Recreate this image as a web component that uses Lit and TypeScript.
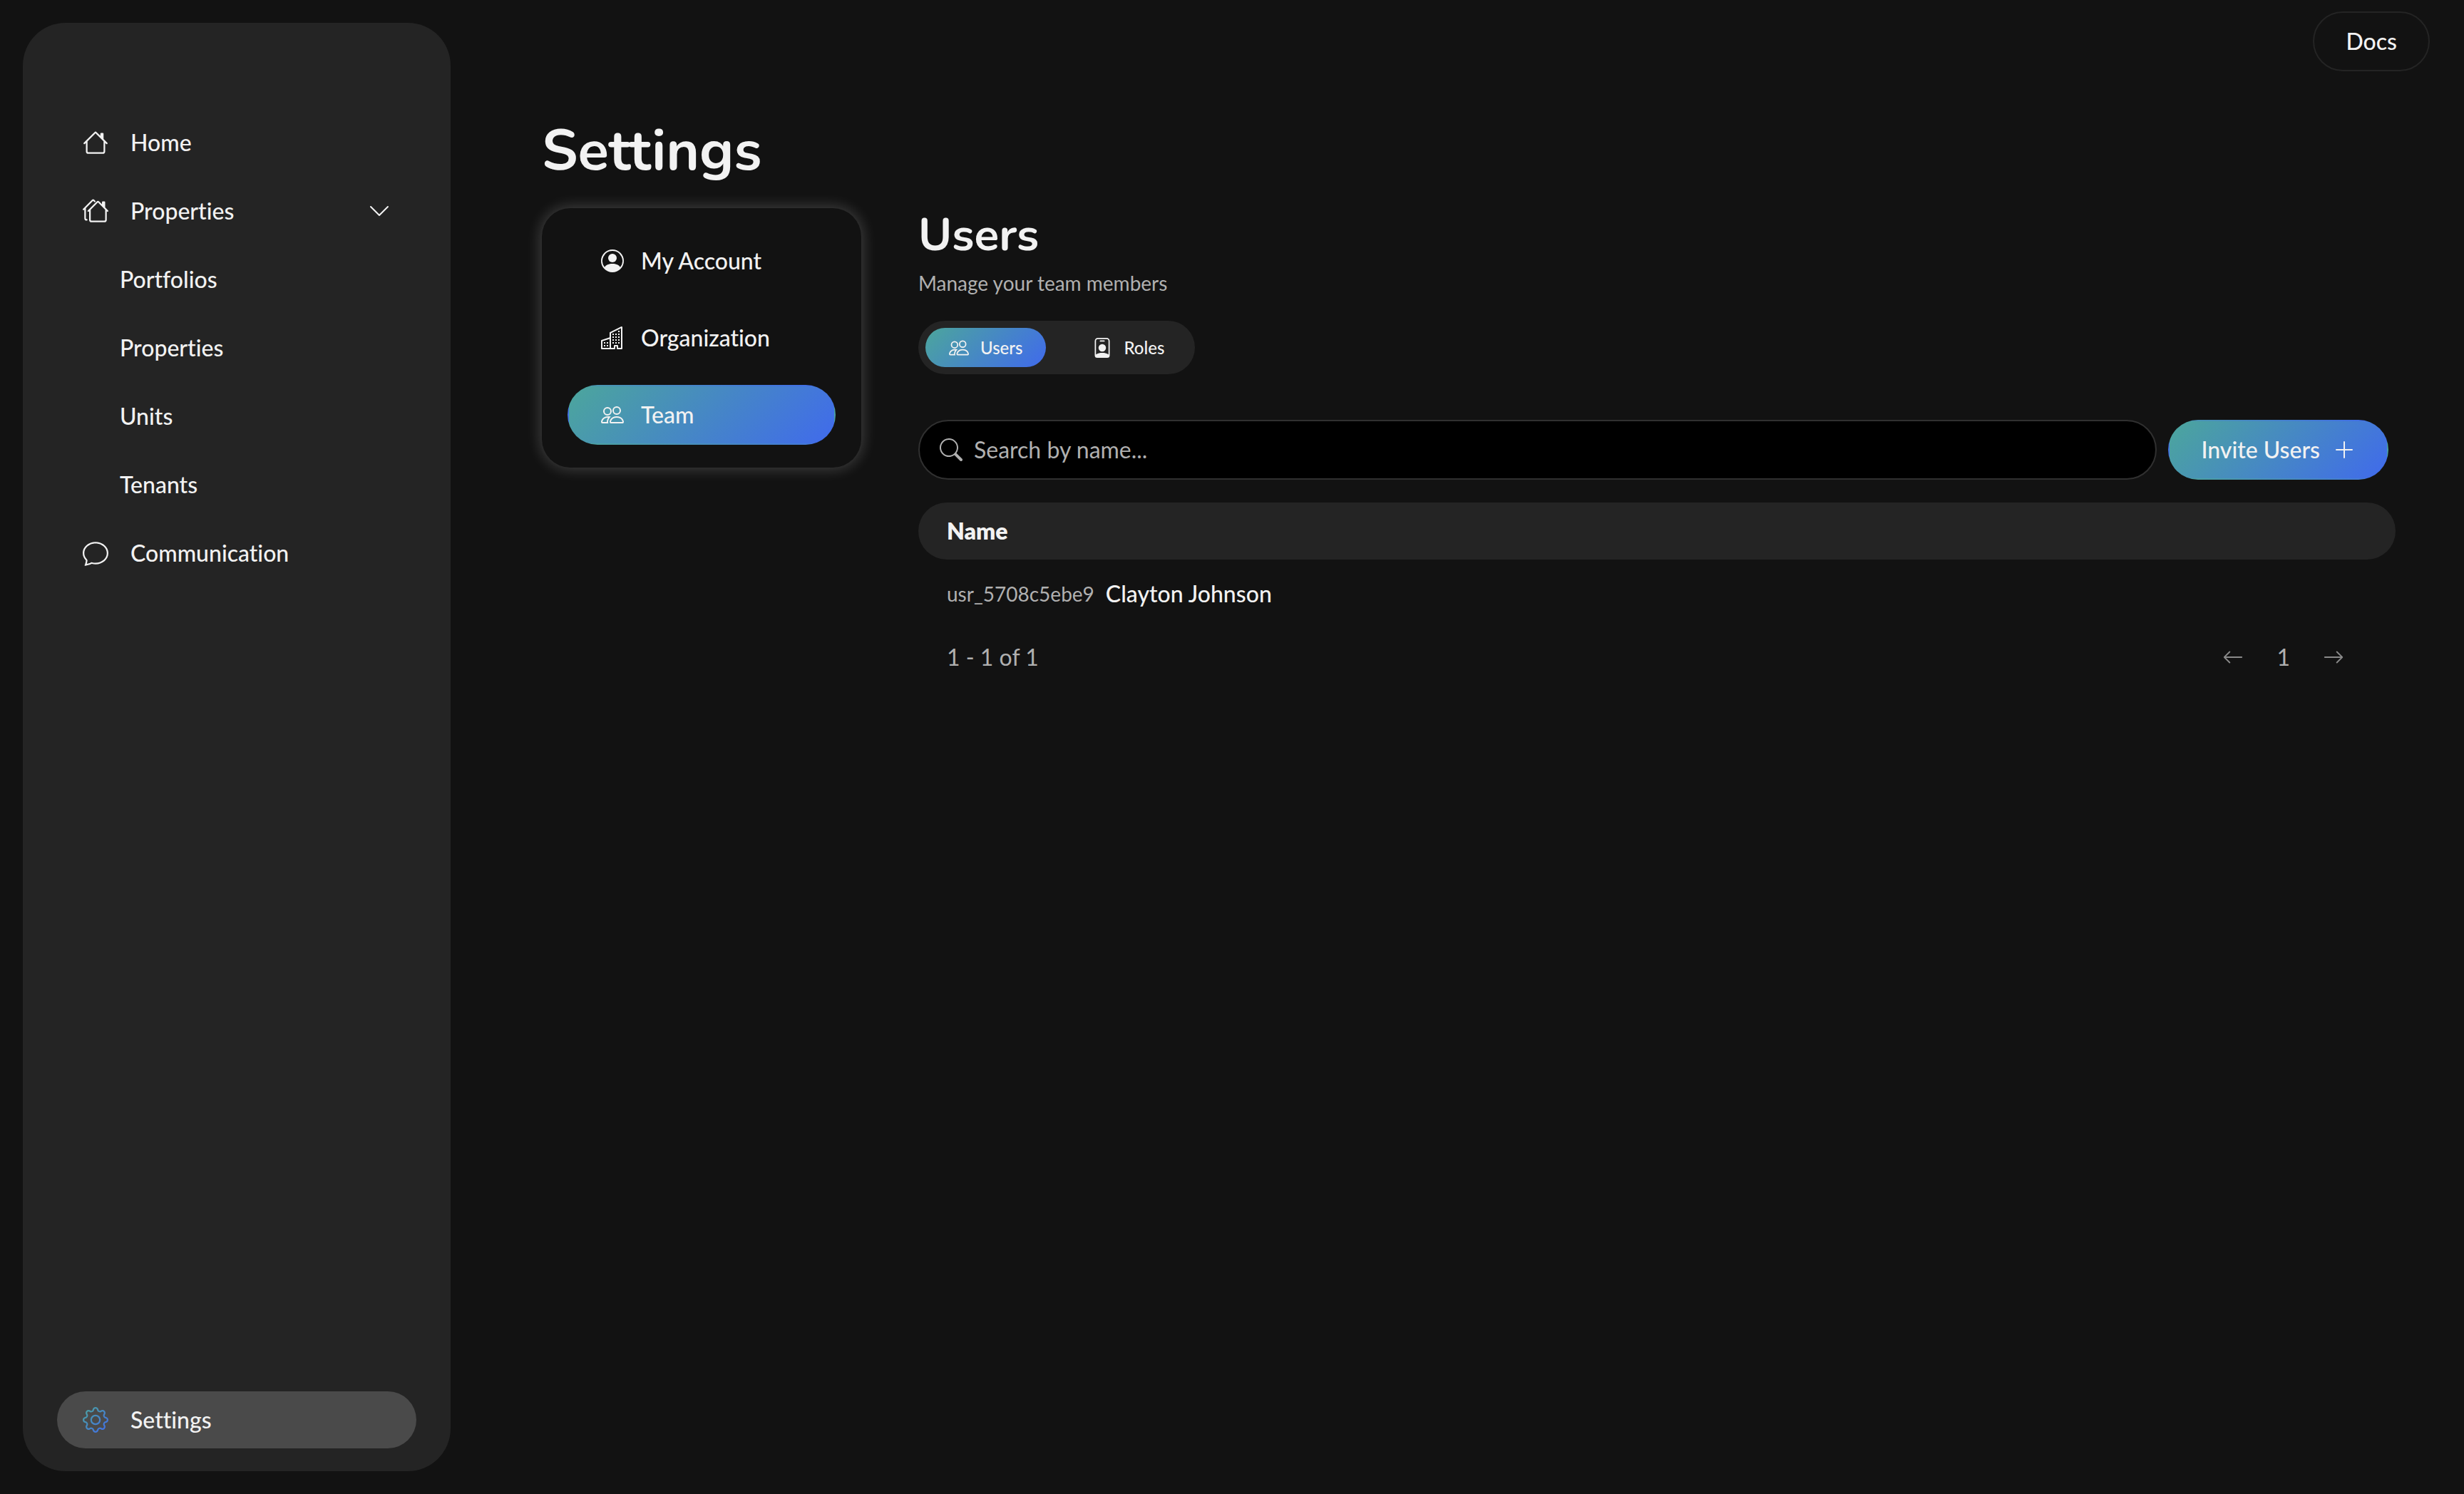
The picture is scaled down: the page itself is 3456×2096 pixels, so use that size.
import { LitElement, html, css, svg, nothing } from "lit";
import { customElement, property, state } from "lit/decorators.js";

const ICONS: Record<string, string[]> = {
  house: [
    "M8.707 1.5a1 1 0 0 0-1.414 0L.646 8.146a.5.5 0 0 0 .708.708L2 8.207V13.5A1.5 1.5 0 0 0 3.5 15h9a1.5 1.5 0 0 0 1.5-1.5V8.207l.646.647a.5.5 0 0 0 .708-.708L13 5.793V2.5a.5.5 0 0 0-.5-.5h-1a.5.5 0 0 0-.5.5v1.293zM13 7.207V13.5a.5.5 0 0 1-.5.5h-9a.5.5 0 0 1-.5-.5V7.207l5-5z",
  ],
  houses: [
    "M5.793 1a1 1 0 0 1 1.414 0l.647.646a.5.5 0 1 1-.708.708L6.5 1.707 2 6.207V12.5a.5.5 0 0 0 .5.5.5.5 0 0 1 0 1A1.5 1.5 0 0 1 1 12.5V7.207l-.146.147a.5.5 0 0 1-.708-.708zm3 1a1 1 0 0 1 1.414 0L12 3.793V2.5a.5.5 0 0 1 .5-.5h1a.5.5 0 0 1 .5.5v3.293l1.854 1.853a.5.5 0 0 1-.708.708L15 8.207V13.5a1.5 1.5 0 0 1-1.5 1.5h-8A1.5 1.5 0 0 1 4 13.5V8.207l-.146.147a.5.5 0 1 1-.708-.708zm.707.707L5 7.207V13.5a.5.5 0 0 0 .5.5h8a.5.5 0 0 0 .5-.5V7.207z",
  ],
  chat: [
    "M2.678 11.894a1 1 0 0 1 .287.801 11 11 0 0 1-.398 2c1.395-.323 2.247-.697 2.634-.893a1 1 0 0 1 .71-.074A8 8 0 0 0 8 14c3.996 0 7-2.807 7-6s-3.004-6-7-6-7 2.808-7 6c0 1.468.617 2.83 1.678 3.894m-.493 3.905a22 22 0 0 1-.713.129c-.2.032-.352-.176-.273-.362a10 10 0 0 0 .244-.637l.003-.01c.248-.72.45-1.548.524-2.319C.743 11.37 0 9.76 0 8c0-3.866 3.582-7 8-7s8 3.134 8 7-3.582 7-8 7a9 9 0 0 1-2.347-.306c-.52.263-1.639.742-3.468 1.105",
  ],
  gear: [
    "M8 4.754a3.246 3.246 0 1 0 0 6.492 3.246 3.246 0 0 0 0-6.492M5.754 8a2.246 2.246 0 1 1 4.492 0 2.246 2.246 0 0 1-4.492 0",
    "M9.796 1.343c-.527-1.79-3.065-1.79-3.592 0l-.094.319a.873.873 0 0 1-1.255.52l-.292-.16c-1.64-.892-3.433.902-2.54 2.541l.159.292a.873.873 0 0 1-.52 1.255l-.319.094c-1.79.527-1.79 3.065 0 3.592l.319.094a.873.873 0 0 1 .52 1.255l-.16.292c-.892 1.64.901 3.434 2.541 2.54l.292-.159a.873.873 0 0 1 1.255.52l.094.319c.527 1.79 3.065 1.79 3.592 0l.094-.319a.873.873 0 0 1 1.255-.52l.292.16c1.64.893 3.434-.902 2.54-2.541l-.159-.292a.873.873 0 0 1 .52-1.255l.319-.094c1.79-.527 1.79-3.065 0-3.592l-.319-.094a.873.873 0 0 1-.52-1.255l.16-.292c.893-1.64-.902-3.433-2.541-2.54l-.292.159a.873.873 0 0 1-1.255-.52zm-2.633.283c.246-.835 1.428-.835 1.674 0l.094.319a1.873 1.873 0 0 0 2.693 1.115l.291-.16c.764-.415 1.6.42 1.184 1.185l-.159.292a1.873 1.873 0 0 0 1.116 2.692l.318.094c.835.246.835 1.428 0 1.674l-.319.094a1.873 1.873 0 0 0-1.115 2.693l.16.291c.415.764-.42 1.6-1.185 1.184l-.291-.159a1.873 1.873 0 0 0-2.693 1.116l-.094.318c-.246.835-1.428.835-1.674 0l-.094-.319a1.873 1.873 0 0 0-2.692-1.115l-.292.16c-.764.415-1.6-.42-1.184-1.185l.159-.291A1.873 1.873 0 0 0 1.945 8.93l-.319-.094c-.835-.246-.835-1.428 0-1.674l.319-.094A1.873 1.873 0 0 0 3.06 4.377l-.16-.292c-.415-.764.42-1.6 1.185-1.184l.292.159a1.873 1.873 0 0 0 2.692-1.115z",
  ],
  chevron: [
    "M1.646 4.646a.5.5 0 0 1 .708 0L8 10.293l5.646-5.647a.5.5 0 0 1 .708.708l-6 6a.5.5 0 0 1-.708 0l-6-6a.5.5 0 0 1 0-.708",
  ],
  account: [
    "M11 6a3 3 0 1 1-6 0 3 3 0 0 1 6 0",
    "M0 8a8 8 0 1 1 16 0A8 8 0 0 1 0 8m8-7a7 7 0 0 0-5.468 11.37C3.242 11.226 4.805 10 8 10s4.757 1.225 5.468 2.37A7 7 0 0 0 8 1",
  ],
  buildings: [
    "M14.763.075A.5.5 0 0 1 15 .5v15a.5.5 0 0 1-.5.5h-3a.5.5 0 0 1-.5-.5V14h-1v1.5a.5.5 0 0 1-.5.5h-9a.5.5 0 0 1-.5-.5V10a.5.5 0 0 1 .342-.474L6 7.64V4.5a.5.5 0 0 1 .276-.447l8-4a.5.5 0 0 1 .487.022M6 8.694 1 10.36V15h5zM7 15h2v-1.5a.5.5 0 0 1 .5-.5h2a.5.5 0 0 1 .5.5V15h2V1.309l-7 3.5z",
    "M2 11h1v1H2zm2 0h1v1H4zm-2 2h1v1H2zm2 0h1v1H4zm4-4h1v1H8zm2 0h1v1h-1zm-2 2h1v1H8zm2 0h1v1h-1zm2-2h1v1h-1zm0 2h1v1h-1zM8 7h1v1H8zm2 0h1v1h-1zm2 0h1v1h-1zM8 5h1v1H8zm2 0h1v1h-1zm2 0h1v1h-1zm0-2h1v1h-1z",
  ],
  people: [
    "M15 14s1 0 1-1-1-4-5-4-5 3-5 4 1 1 1 1zm-7.978-1L7 12.996c.001-.264.167-1.03.76-1.72C8.312 10.629 9.282 10 11 10c1.717 0 2.687.63 3.24 1.276.593.69.758 1.457.76 1.72l-.008.002-.014.002zM11 7a2 2 0 1 0 0-4 2 2 0 0 0 0 4m3-2a3 3 0 1 1-6 0 3 3 0 0 1 6 0M6.936 9.28a6 6 0 0 0-1.23-.247A7 7 0 0 0 5 9c-4 0-5 3-5 4q0 1 1 1h4.216A2.24 2.24 0 0 1 5 13c0-1.01.377-2.042 1.09-2.904.243-.294.526-.569.846-.816M4.92 10A5.5 5.5 0 0 0 4 13H1c0-.26.164-1.03.76-1.724.545-.636 1.492-1.256 3.16-1.275ZM1.5 5.5a3 3 0 1 1 6 0 3 3 0 0 1-6 0m3-2a2 2 0 1 0 0 4 2 2 0 0 0 0-4",
  ],
  badge: [
    "M6.5 2a.5.5 0 0 0 0 1h3a.5.5 0 0 0 0-1zM11 8a3 3 0 1 1-6 0 3 3 0 0 1 6 0",
    "M4.5 0A2.5 2.5 0 0 0 2 2.5V14a2 2 0 0 0 2 2h8a2 2 0 0 0 2-2V2.5A2.5 2.5 0 0 0 11.5 0zM3 2.5A1.5 1.5 0 0 1 4.5 1h7A1.5 1.5 0 0 1 13 2.5v10.795a4.2 4.2 0 0 0-.776-.492C11.392 12.387 10.063 12 8 12s-3.392.387-4.224.803a4.2 4.2 0 0 0-.776.492z",
  ],
  search: [
    "M11.742 10.344a6.5 6.5 0 1 0-1.397 1.398h-.001q.044.06.098.115l3.85 3.85a1 1 0 0 0 1.415-1.414l-3.85-3.85a1 1 0 0 0-.115-.1zM12 6.5a5.5 5.5 0 1 1-11 0 5.5 5.5 0 0 1 11 0",
  ],
  plus: [
    "M8 2a.5.5 0 0 1 .5.5v5h5a.5.5 0 0 1 0 1h-5v5a.5.5 0 0 1-1 0v-5h-5a.5.5 0 0 1 0-1h5v-5A.5.5 0 0 1 8 2",
  ],
  left: [
    "M15 8a.5.5 0 0 0-.5-.5H2.707l3.147-3.146a.5.5 0 1 0-.708-.708l-4 4a.5.5 0 0 0 0 .708l4 4a.5.5 0 0 0 .708-.708L2.707 8.5H14.5A.5.5 0 0 0 15 8",
  ],
  right: [
    "M1 8a.5.5 0 0 1 .5-.5h11.793l-3.147-3.146a.5.5 0 0 1 .708-.708l4 4a.5.5 0 0 1 0 .708l-4 4a.5.5 0 0 1-.708-.708L13.293 8.5H1.5A.5.5 0 0 1 1 8",
  ],
};

@customElement("ui-icon")
class UiIcon extends LitElement {
  @property() name = "";
  @property({ type: Boolean }) tinted = false;

  static styles = css`
    :host {
      display: block;
      flex: none;
      width: 32px;
      height: 32px;
    }
    .glyph {
      display: block;
      width: 100%;
      height: 100%;
    }
  `;

  render() {
    const fill = this.tinted ? "url(#tint)" : "currentColor";
    return html`<svg class="glyph" viewBox="0 0 16 16" fill=${fill} aria-hidden="true">
      ${this.tinted
        ? svg`<defs>
            <linearGradient id="tint" gradientUnits="userSpaceOnUse" x1="0" y1="0" x2="16" y2="16">
              <stop offset="0" stop-color="#4ca69c" />
              <stop offset="1" stop-color="#406aec" />
            </linearGradient>
          </defs>`
        : nothing}
      ${(ICONS[this.name] ?? []).map((d) => svg`<path fill-rule="evenodd" d=${d} />`)}
    </svg>`;
  }
}

interface NavItem {
  label: string;
  icon: string;
  children?: string[];
}

const NAV: NavItem[] = [
  { label: "Home", icon: "house" },
  { label: "Properties", icon: "houses", children: ["Portfolios", "Properties", "Units", "Tenants"] },
  { label: "Communication", icon: "chat" },
];

@customElement("app-sidebar")
class AppSidebar extends LitElement {
  @state() private open = true;

  static styles = css`
    :host {
      display: flex;
      flex: none;
      box-sizing: border-box;
      width: 600px;
      height: calc(100vh - 64px);
      margin: 32px;
      position: sticky;
      top: 32px;
    }
    .nav {
      display: flex;
      flex-direction: column;
      justify-content: space-between;
      flex: 1;
      box-sizing: border-box;
      padding: 128px 48px 32px;
      border-radius: 60px;
      background: #242424;
    }
    .list {
      display: flex;
      flex-direction: column;
      gap: 16px;
      margin: 0;
      padding: 0;
      list-style: none;
    }
    .item {
      display: flex;
      align-items: center;
      gap: 31px;
      box-sizing: border-box;
      width: 100%;
      height: 80px;
      padding: 0 36px;
      border: 0;
      border-radius: 40px;
      background: none;
      color: inherit;
      font: inherit;
      text-align: left;
      text-decoration: none;
      cursor: pointer;
    }
    .item.sub {
      padding-left: 88px;
    }
    .item.active {
      background: #4a4a4a;
    }
    .icon {
      width: 36px;
      height: 36px;
    }
    .label {
      flex: 1;
    }
  `;

  private renderItem(item: NavItem) {
    if (!item.children) {
      return html`<li>
        <a class="item" href="#"><ui-icon class="icon" name=${item.icon}></ui-icon><span class="label">${item.label}</span></a>
      </li>`;
    }
    return html`<li>
        <button class="item" aria-expanded=${this.open} @click=${() => (this.open = !this.open)}>
          <ui-icon class="icon" name=${item.icon}></ui-icon><span class="label">${item.label}</span
          ><ui-icon name="chevron"></ui-icon>
        </button>
      </li>
      ${this.open
        ? item.children.map((child) => html`<li><a class="item sub" href="#">${child}</a></li>`)
        : nothing}`;
  }

  render() {
    return html`<nav class="nav" aria-label="Main">
      <ul class="list">
        ${NAV.map((item) => this.renderItem(item))}
      </ul>
      <a class="item active" href="#" aria-current="page">
        <ui-icon class="icon" name="gear" tinted></ui-icon><span class="label">Settings</span>
      </a>
    </nav>`;
  }
}

@customElement("app-root")
class AppRoot extends LitElement {
  @state() private section = "Team";
  @state() private tab = "Users";

  private sections = [
    { label: "My Account", icon: "account" },
    { label: "Organization", icon: "buildings" },
    { label: "Team", icon: "people" },
  ];
  private tabs = [
    { label: "Users", icon: "people" },
    { label: "Roles", icon: "badge" },
  ];
  private users = [{ id: "usr_5708c5ebe9", name: "Clayton Johnson" }];

  static styles = css`
    :host {
      --accent: linear-gradient(135deg, #4ca69c, #406aec);
      display: flex;
      min-height: 100vh;
      background: #121212;
      color: #f2f2f2;
      font: 500 32px/40px Lato, "Liberation Sans", sans-serif;
      font-variant-ligatures: none;
    }
    .page {
      flex: 1;
      min-width: 0;
    }
    .topbar {
      display: flex;
      justify-content: flex-end;
      padding: 16px 48px 0;
    }
    .content {
      padding: 56px 96px 96px;
    }
    .title,
    .heading {
      margin: 0;
      font-family: Nunito, "Noto Sans", sans-serif;
      font-weight: 700;
      font-variant-ligatures: normal;
    }
    .title {
      margin-bottom: 24px;
      font-size: 80px;
      line-height: 112px;
    }
    .heading {
      font-size: 64px;
      line-height: 76px;
    }
    .columns {
      display: grid;
      grid-template-columns: 448px minmax(0, 1fr);
      align-items: start;
      gap: 80px;
    }
    .button {
      display: flex;
      align-items: center;
      box-sizing: border-box;
      height: 84px;
      padding: 0 44px;
      border: 2px solid transparent;
      border-radius: 42px;
      background: none;
      color: inherit;
      font: inherit;
      text-decoration: none;
      white-space: nowrap;
      cursor: pointer;
    }
    .outlined {
      border-color: #242424;
    }
    .filled {
      background: var(--accent);
    }
    .card {
      display: flex;
      flex-direction: column;
      gap: 24px;
      padding: 32px 36px;
      border-radius: 40px;
      box-shadow: 0 0 20px 2px rgba(255, 255, 255, 0.2);
    }
    .section {
      gap: 24px;
      padding: 0 45px;
    }
    .hint {
      margin: 10px 0 34px;
      color: #b0b0b0;
      font-weight: 400;
      font-size: 28px;
      line-height: 38px;
    }
    .tabs {
      display: inline-flex;
      gap: 32px;
      padding: 10px;
      border-radius: 38px;
      background: #242424;
    }
    .tab {
      display: flex;
      align-items: center;
      gap: 16px;
      height: 55px;
      padding: 0 33px;
      border: 0;
      border-radius: 28px;
      background: none;
      color: inherit;
      font: inherit;
      font-size: 24px;
      cursor: pointer;
    }
    .tab.filled {
      background: var(--accent);
    }
    .tab-icon {
      width: 28px;
      height: 28px;
    }
    .tools {
      display: flex;
      gap: 16px;
      margin: 64px 10px 32px 0;
    }
    .search {
      display: flex;
      align-items: center;
      flex: 1;
      gap: 16px;
      box-sizing: border-box;
      height: 84px;
      padding: 0 28px;
      border: 2px solid #303030;
      border-radius: 42px;
      background: #000;
      color: #b0b0b0;
    }
    .field {
      flex: 1;
      min-width: 0;
      padding: 0;
      border: 0;
      outline: 0;
      background: none;
      color: #f2f2f2;
      font: inherit;
      font-weight: 400;
    }
    .field::placeholder {
      color: #b0b0b0;
      opacity: 1;
    }
    .invite {
      gap: 18px;
    }
    .table {
      width: 100%;
      border-collapse: separate;
      border-spacing: 0;
    }
    .head {
      height: 80px;
      padding: 0 40px;
      border-radius: 40px;
      background: #242424;
      font-weight: 800;
      text-align: left;
    }
    .cell {
      height: 96px;
      padding: 0 40px;
    }
    .user {
      display: flex;
      align-items: center;
      gap: 16px;
    }
    .id {
      color: #b0b0b0;
      font-weight: 400;
      font-size: 28px;
    }
    .footer {
      display: flex;
      align-items: center;
      justify-content: space-between;
      height: 82px;
      padding: 0 72px 0 40px;
      color: #b0b0b0;
      font-weight: 400;
    }
    .pager {
      display: flex;
      align-items: center;
      gap: 46px;
    }
    .step {
      padding: 0;
      border: 0;
      background: none;
      color: #8a8a8a;
    }
    .step-icon {
      width: 30px;
      height: 30px;
    }
  `;

  render() {
    return html`
      <app-sidebar></app-sidebar>
      <div class="page">
        <header class="topbar"><a class="button outlined" href="#">Docs</a></header>
        <main class="content">
          <h1 class="title">Settings</h1>
          <div class="columns">
            <nav class="card" aria-label="Settings">
              ${this.sections.map(
                (s) => html`<button
                  class="button section ${s.label === this.section ? "filled" : ""}"
                  @click=${() => (this.section = s.label)}
                >
                  <ui-icon name=${s.icon}></ui-icon>${s.label}
                </button>`
              )}
            </nav>
            <section>
              <h2 class="heading">Users</h2>
              <p class="hint">Manage your team members</p>
              <div class="tabs" role="tablist">
                ${this.tabs.map(
                  (t) => html`<button
                    class="tab ${t.label === this.tab ? "filled" : ""}"
                    role="tab"
                    aria-selected=${t.label === this.tab}
                    @click=${() => (this.tab = t.label)}
                  >
                    <ui-icon class="tab-icon" name=${t.icon}></ui-icon>${t.label}
                  </button>`
                )}
              </div>
              <div class="tools">
                <label class="search">
                  <ui-icon name="search"></ui-icon>
                  <input class="field" type="text" aria-label="Search by name" placeholder="Search by name..." />
                </label>
                <button class="button filled invite">Invite Users<ui-icon name="plus"></ui-icon></button>
              </div>
              <table class="table">
                <thead>
                  <tr><th class="head" scope="col">Name</th></tr>
                </thead>
                <tbody>
                  ${this.users.map(
                    (u) => html`<tr>
                      <td class="cell"><div class="user"><span class="id">${u.id}</span><span>${u.name}</span></div></td>
                    </tr>`
                  )}
                </tbody>
              </table>
              <div class="footer">
                <span>1 - 1 of 1</span>
                <div class="pager">
                  <button class="step" aria-label="Previous page" disabled><ui-icon class="step-icon" name="left"></ui-icon></button>
                  <span>1</span>
                  <button class="step" aria-label="Next page" disabled><ui-icon class="step-icon" name="right"></ui-icon></button>
                </div>
              </div>
            </section>
          </div>
        </main>
      </div>
    `;
  }
}
